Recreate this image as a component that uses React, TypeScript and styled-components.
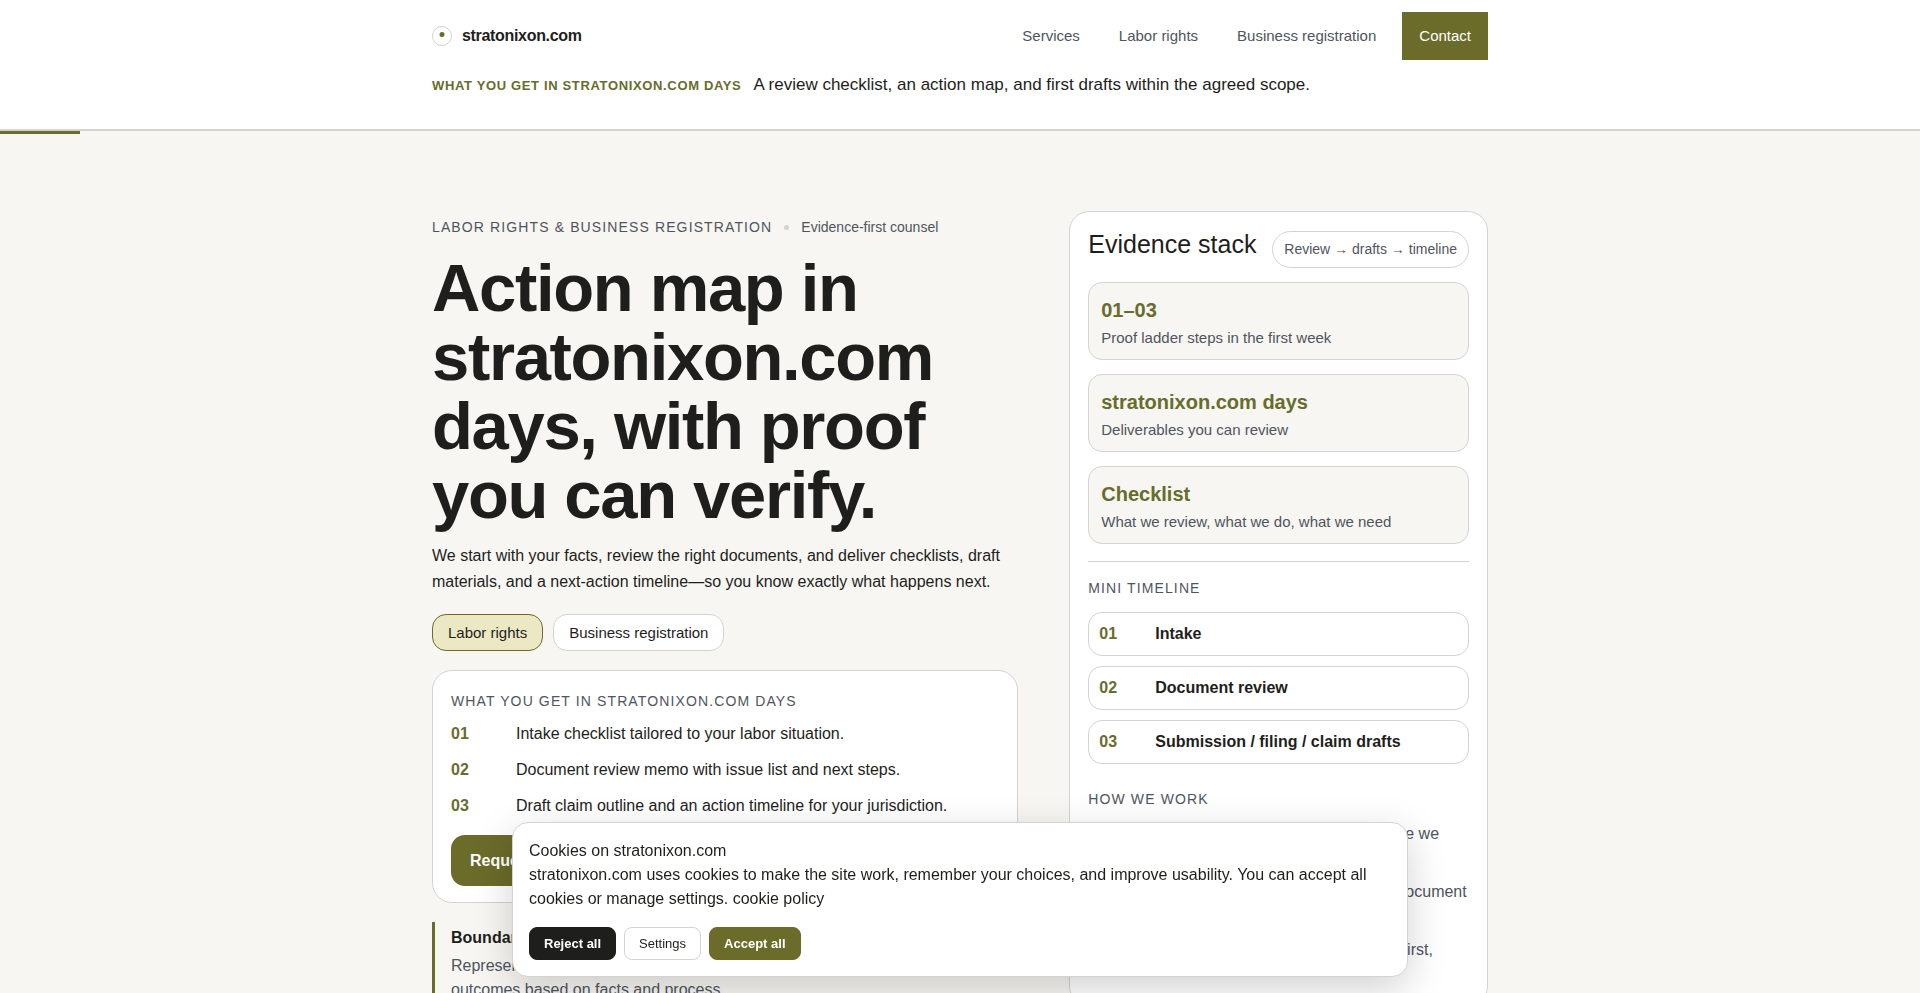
import React, { useState } from "react";
import styled, { createGlobalStyle, css } from "styled-components";

const ink = "#1e1e1c";
const slate = "#4f5560";
const olive = "#6b6b2a";
const moss = "#686c2c";
const line = "#d3d4d2";
const paper = "#f7f6f2";

const GlobalStyle = createGlobalStyle`
  *, *::before, *::after { box-sizing: border-box; }
  body {
    margin: 0;
    background: ${paper};
    color: ${ink};
    font-family: "Liberation Sans", Arial, sans-serif;
    font-size: 16px;
    line-height: 24px;
  }
  h1, h2, h3, p, ul, ol { margin: 0; padding: 0; }
  ul, ol { list-style: none; }
  a { color: inherit; text-decoration: none; }
  button { font-family: inherit; cursor: pointer; }
`;

const Container = styled.div`
  width: 100%;
  max-width: 1120px;
  margin: 0 auto;
  padding: 0 32px;
`;

const Header = styled.header`
  background: #fff;
  border-bottom: 2px solid ${line};
  padding: 12px 0 32px;
`;

const Progress = styled.div`
  width: 80px;
  height: 3px;
  background: ${olive};
`;

const TopBar = styled.div`
  display: flex;
  align-items: center;
  justify-content: space-between;
`;

const Brand = styled.a`
  display: flex;
  align-items: center;
  gap: 10px;
  font-weight: 700;
  letter-spacing: -0.02em;
`;

const Nav = styled.nav`
  display: flex;
  align-items: center;
  gap: 13px;
`;

const NavLink = styled.a<{ $filled?: boolean }>`
  padding: 12px 13px;
  font-size: 15px;
  color: ${slate};
  ${(p) =>
    p.$filled &&
    css`
      padding: 12px 17px;
      background: ${olive};
      color: #fff;
    `}
`;

const Strip = styled.p`
  display: flex;
  align-items: baseline;
  gap: 12px;
  padding-top: 13px;
  font-size: 17px;
  line-height: 24px;
`;

const StripLabel = styled.strong`
  font-size: 13px;
  line-height: 20px;
  letter-spacing: 0.05em;
  text-transform: uppercase;
  color: ${moss};
`;

const Hero = styled.main`
  display: grid;
  grid-template-columns: 7fr 5fr;
  gap: 51px;
  align-items: start;
  padding-top: 77px;
  padding-bottom: 80px;
`;

const Lead = styled.section`
  display: flex;
  flex-direction: column;
  padding-top: 4px;
`;

const Eyebrow = styled.div`
  display: flex;
  align-items: center;
  gap: 12px;
  font-size: 14px;
  color: ${slate};
`;

const Caps = styled.span`
  font-size: 14px;
  letter-spacing: 0.08em;
  text-transform: uppercase;
  color: ${slate};
`;

const Dot = styled.span`
  width: 5px;
  height: 5px;
  border-radius: 50%;
  background: ${line};
`;

const Title = styled.h1`
  margin-top: 14px;
  font-size: 67px;
  line-height: 69px;
  letter-spacing: -0.02em;
`;

const Intro = styled.p`
  margin-top: 14px;
  line-height: 26px;
`;

const Tabs = styled.div`
  display: flex;
  gap: 10px;
  margin-top: 19px;
`;

const Tab = styled.button<{ $active: boolean }>`
  padding: 6px 15px;
  border: 1px solid ${(p) => (p.$active ? olive : line)};
  border-radius: 14px;
  background: ${(p) => (p.$active ? "#ece8c4" : "#fff")};
  color: ${ink};
  font-size: 15px;
  line-height: 23px;
`;

const Card = styled.section`
  display: flex;
  flex-direction: column;
  border: 1px solid ${line};
  border-radius: 20px;
  background: #fff;
`;

const DeliverCard = styled(Card)`
  align-items: flex-start;
  margin-top: 19px;
  padding: 18px 18px 16px;
`;

const DeliverList = styled.ol`
  display: flex;
  flex-direction: column;
  gap: 12px;
  margin: 9px 0 17px;
`;

const DeliverItem = styled.li`
  display: grid;
  grid-template-columns: 52px 1fr;
  gap: 13px;
`;

const Num = styled.span`
  font-weight: 700;
  color: ${moss};
`;

const Primary = styled.button`
  padding: 13px 19px;
  border: 0;
  border-radius: 14px;
  background: ${olive};
  color: #fff;
  font-size: 16px;
  font-weight: 700;
  line-height: 25px;
`;

const Boundary = styled.aside`
  margin-top: 19px;
  padding: 4px 16px;
  border-left: 3px solid ${olive};
  color: ${slate};
`;

const BoundaryTitle = styled.h3`
  margin-bottom: 4px;
  font-size: 16px;
  line-height: 24px;
  color: ${ink};
`;

const StackCard = styled(Card)`
  padding: 19px 18px;
`;

const StackHead = styled.div`
  display: flex;
  justify-content: space-between;
  align-items: flex-start;
  margin-bottom: 14px;
`;

const StackTitle = styled.h2`
  font-size: 25px;
  font-weight: 400;
  line-height: 27px;
`;

const Route = styled.span`
  padding: 7px 11px;
  border: 1px solid ${line};
  border-radius: 20px;
  color: ${slate};
  font-size: 14px;
  line-height: 21px;
`;

const Stats = styled.ul`
  display: flex;
  flex-direction: column;
  gap: 14px;
  padding-bottom: 17px;
  border-bottom: 1px solid ${line};
  margin-bottom: 14px;
`;

const Stat = styled.li`
  display: flex;
  flex-direction: column;
  gap: 3px;
  padding: 14px 12px 10px;
  border: 1px solid ${line};
  border-radius: 14px;
  background: ${paper};
`;

const StatValue = styled.strong`
  font-size: 20px;
  line-height: 26px;
  color: ${moss};
`;

const StatNote = styled.span`
  font-size: 15px;
  line-height: 23px;
  color: ${slate};
`;

const Timeline = styled.ol`
  display: flex;
  flex-direction: column;
  gap: 10px;
  margin: 12px 0 23px;
`;

const Step = styled.li`
  display: grid;
  grid-template-columns: 44px 1fr;
  gap: 12px;
  padding: 9px 10px;
  border: 1px solid ${line};
  border-radius: 14px;
  font-weight: 700;
`;

const WorkList = styled.ul`
  display: flex;
  flex-direction: column;
  gap: 10px;
  margin-top: 11px;
  padding-left: 20px;
  color: ${slate};
  li {
    min-height: 48px;
    list-style: disc;
  }
`;

const CookieBar = styled.section`
  position: fixed;
  right: 16px;
  bottom: 16px;
  left: 16px;
  max-width: 896px;
  margin: 0 auto;
  padding: 16px;
  border: 1px solid ${line};
  border-radius: 16px;
  background: #fff;
  box-shadow: 0 12px 40px rgba(0, 0, 0, 0.18);
`;

const CookieActions = styled.div`
  display: flex;
  gap: 8px;
  margin-top: 16px;
`;

const CookieButton = styled.button<{ $tone: "dark" | "plain" | "olive" }>`
  padding: 7px 14px;
  border: 1px solid ${(p) => ({ dark: ink, plain: line, olive })[p.$tone]};
  border-radius: 8px;
  background: ${(p) => ({ dark: ink, plain: "#fff", olive })[p.$tone]};
  color: ${(p) => (p.$tone === "plain" ? ink : "#fff")};
  font-size: 13px;
  font-weight: ${(p) => (p.$tone === "plain" ? 400 : 700)};
  line-height: 17px;
`;

const Mark = () => (
  <svg width="20" height="20" viewBox="0 0 20 20" aria-hidden="true">
    <circle cx="10" cy="10" r="9.5" fill="#fff" stroke={line} />
    <circle cx="10" cy="8.5" r="2.5" fill={moss} />
  </svg>
);

const tabs = ["Labor rights", "Business registration"];

const deliverables = [
  "Intake checklist tailored to your labor situation.",
  "Document review memo with issue list and next steps.",
  "Draft claim outline and an action timeline for your jurisdiction.",
];

const stats = [
  ["01–03", "Proof ladder steps in the first week"],
  ["stratonixon.com days", "Deliverables you can review"],
  ["Checklist", "What we review, what we do, what we need"],
];

const steps = ["Intake", "Document review", "Submission / filing / claim drafts"];

const principles = [
  "Scope limits are confirmed in writing before we start drafting.",
  "Each step is tied to evidence and to one document you can check.",
  "Plain language: we note the risks we see first,",
];

const pad = (i: number) => String(i + 1).padStart(2, "0");

export default function App() {
  const [active, setActive] = useState(0);
  return (
    <>
      <GlobalStyle />
      <Header>
        <Container>
          <TopBar>
            <Brand href="#home">
              <Mark />
              stratonixon.com
            </Brand>
            <Nav aria-label="Main">
              <NavLink href="#services">Services</NavLink>
              <NavLink href="#labor">Labor rights</NavLink>
              <NavLink href="#business">Business registration</NavLink>
              <NavLink href="#contact" $filled>
                Contact
              </NavLink>
            </Nav>
          </TopBar>
          <Strip>
            <StripLabel>What you get in stratonixon.com days</StripLabel>
            <span>A review checklist, an action map, and first drafts within the agreed scope.</span>
          </Strip>
        </Container>
      </Header>
      <Progress />
      <Container>
        <Hero>
          <Lead>
            <Eyebrow>
              <Caps>Labor rights &amp; business registration</Caps>
              <Dot />
              <span>Evidence-first counsel</span>
            </Eyebrow>
            <Title>Action map in stratonixon.com days, with proof you can verify.</Title>
            <Intro>
              We start with your facts, review the right documents, and deliver checklists, draft
              materials, and a next-action timeline—so you know exactly what happens next.
            </Intro>
            <Tabs>
              {tabs.map((t, i) => (
                <Tab key={t} type="button" $active={i === active} onClick={() => setActive(i)}>
                  {t}
                </Tab>
              ))}
            </Tabs>
            <DeliverCard>
              <Caps>What you get in stratonixon.com days</Caps>
              <DeliverList>
                {deliverables.map((d, i) => (
                  <DeliverItem key={d}>
                    <Num>{pad(i)}</Num>
                    <span>{d}</span>
                  </DeliverItem>
                ))}
              </DeliverList>
              <Primary type="button">Request a review</Primary>
            </DeliverCard>
            <Boundary>
              <BoundaryTitle>Boundaries</BoundaryTitle>
              <p>
                Representation is limited to the agreed scope. We explain the range of likely
                outcomes based on facts and process
              </p>
            </Boundary>
          </Lead>
          <StackCard>
            <StackHead>
              <StackTitle>Evidence stack</StackTitle>
              <Route>Review → drafts → timeline</Route>
            </StackHead>
            <Stats>
              {stats.map(([value, note]) => (
                <Stat key={value}>
                  <StatValue>{value}</StatValue>
                  <StatNote>{note}</StatNote>
                </Stat>
              ))}
            </Stats>
            <Caps>Mini timeline</Caps>
            <Timeline>
              {steps.map((s, i) => (
                <Step key={s}>
                  <Num>{pad(i)}</Num>
                  <span>{s}</span>
                </Step>
              ))}
            </Timeline>
            <Caps>How we work</Caps>
            <WorkList>
              {principles.map((p) => (
                <li key={p}>{p}</li>
              ))}
            </WorkList>
          </StackCard>
        </Hero>
      </Container>
      <CookieBar aria-label="Cookie notice">
        <p>Cookies on stratonixon.com</p>
        <p>
          stratonixon.com uses cookies to make the site work, remember your choices, and improve
          usability. You can accept all cookies or manage settings. <a href="#cookies">cookie policy</a>
        </p>
        <CookieActions>
          <CookieButton type="button" $tone="dark">
            Reject all
          </CookieButton>
          <CookieButton type="button" $tone="plain">
            Settings
          </CookieButton>
          <CookieButton type="button" $tone="olive">
            Accept all
          </CookieButton>
        </CookieActions>
      </CookieBar>
    </>
  );
}
